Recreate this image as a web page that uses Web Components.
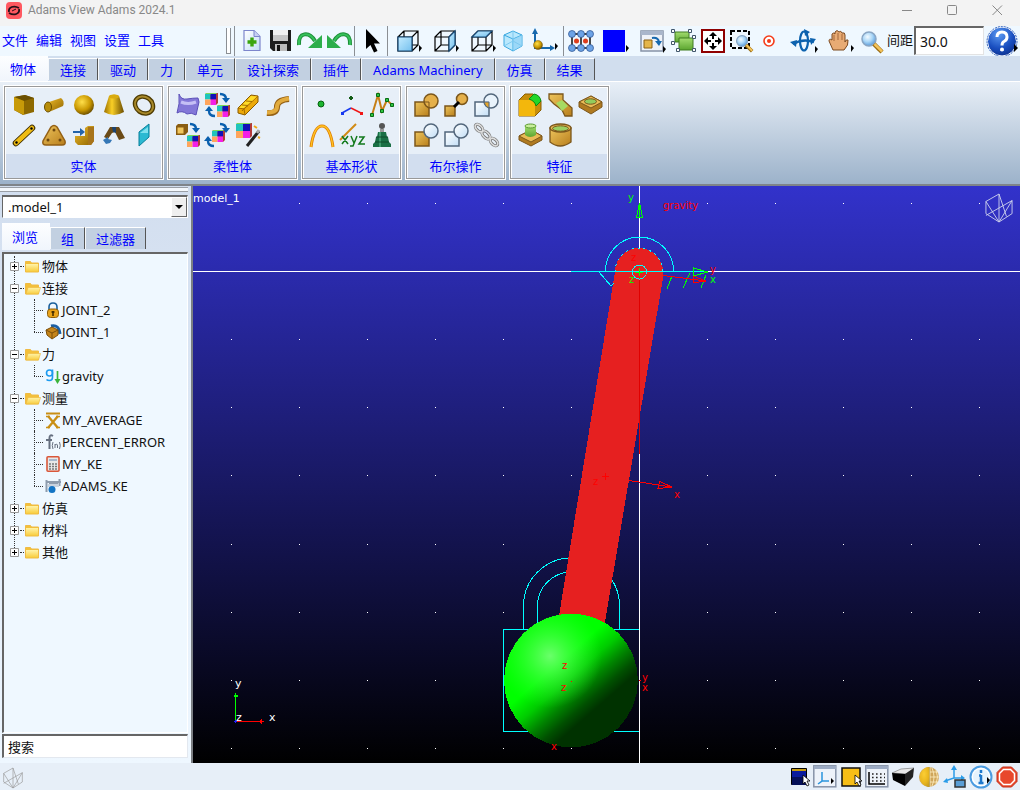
<!DOCTYPE html>
<html lang="zh-CN">
<head>
<meta charset="utf-8">
<title>Adams View Adams 2024.1</title>
<style>
html, body { margin: 0; height: 100%; }
body { font: 13px/20px "Noto Sans", "Noto Sans CJK SC", sans-serif; color: #111; background: #e7eff8; }
</style>
</head>
<body>
<adams-app></adams-app>
<script>
const DEFS = `<defs>
<linearGradient id="gold" x1="0" y1="0" x2="1" y2="1"><stop offset="0" stop-color="#f0bd2c"/><stop offset="1" stop-color="#8f6400"/></linearGradient>
<linearGradient id="tan" x1="0" y1="0" x2="1" y2="1"><stop offset="0" stop-color="#edc45c"/><stop offset="1" stop-color="#b87e1c"/></linearGradient>
<linearGradient id="cone" x1="0" x2="1"><stop offset="0" stop-color="#9a6f00"/><stop offset=".4" stop-color="#f9cf26"/><stop offset="1" stop-color="#6b4c00"/></linearGradient>
<radialGradient id="ball" cx=".4" cy=".35" r=".7"><stop offset="0" stop-color="#ffdf4a"/><stop offset=".6" stop-color="#c99700"/><stop offset="1" stop-color="#5e4400"/></radialGradient>
<linearGradient id="ice" x1="0" y1="0" x2="1" y2="1"><stop offset="0" stop-color="#fff"/><stop offset="1" stop-color="#c3def6"/></linearGradient>
<linearGradient id="sky" x1="0" y1="0" x2="1" y2="1"><stop offset="0" stop-color="#c5ecff"/><stop offset="1" stop-color="#74c0ee"/></linearGradient>
<linearGradient id="lime" x1="0" y1="0" x2="0" y2="1"><stop offset="0" stop-color="#a3dc70"/><stop offset="1" stop-color="#5ba52f"/></linearGradient>
<linearGradient id="fold" x1="0" y1="0" x2="0" y2="1"><stop offset="0" stop-color="#fff3a8"/><stop offset="1" stop-color="#f8cd3e"/></linearGradient>
<radialGradient id="lens" cx=".4" cy=".35" r=".7"><stop offset="0" stop-color="#f4fbff"/><stop offset=".5" stop-color="#a9d6f7"/><stop offset="1" stop-color="#4f93d6"/></radialGradient>
<radialGradient id="gem" cx=".4" cy=".25" r=".8"><stop offset="0" stop-color="#5c9bf2"/><stop offset=".6" stop-color="#1a4fc0"/><stop offset="1" stop-color="#0b2f8c"/></radialGradient>
</defs>`;
const MORE = '<path d="M23 16l3 3-3 4z" fill="#000"/>';
const quad = (x, y, s) => `<g transform="translate(${x} ${y})"><path d="M0 1l2-1h${s}v${s - 1}l-2 2z" fill="#b43a3a"/><path d="M1 0h${s}l-2 2H0z" fill="#7cd858"/><path d="M0 1h${s / 2}v${s / 2}H0z" fill="#1fc4bd"/><path d="M${s / 2} 1h${s / 2}v${s / 2}H${s / 2}z" fill="#1111b8"/><path d="M0 ${s / 2 + 1}h${s / 2}v${s / 2}H0z" fill="#ffa55c"/><path d="M${s / 2} ${s / 2 + 1}h${s / 2}v${s / 2}H${s / 2}z" fill="#f31fe6"/></g>`;
const arcDown = (x, y) => `<g transform="translate(${x} ${y})"><path d="M0 1q6 0 6 5" fill="none" stroke="#0a5fae" stroke-width="2.400"/><path d="M2 5h8l-4 5z" fill="#0a5fae"/></g>`;
const arcUp = (x, y) => `<g transform="translate(${x} ${y})"><path d="M9 10q-6 0-6-5" fill="none" stroke="#0a5fae" stroke-width="2.400"/><path d="M-1 5h8l-4-5z" fill="#0a5fae"/></g>`;
const lens = '<circle cx="9" cy="9" r="7" fill="url(#lens)" stroke="#8aa6c4" stroke-width="1.500"/><path d="M14 14l8 8" stroke="#9a6b10" stroke-width="4.500"/><path d="M14.500 14l7.500 7.500" stroke="#f4c45a" stroke-width="2.500"/>';
const wire = '<path d="M2 8h14v14H2zM8 2h14v14H8zM2 8l6-6M16 8l6-6M2 22l6-6M16 22l6-6" fill="none" stroke="#000" stroke-width="1.200"/>';
const pointer = (x, y) => `<path transform="translate(${x} ${y})" d="M0 0v9l2-2 2 4 2-1-2-4h3z" fill="#fff" stroke="#000" stroke-width=".8"/>`;
const mesh = '<path d="M1 9L15 1v30L1 22zM15 31L29 22V8zM1 24L29 8M15 1l8 24M1 9l14 22" fill="none" stroke="currentColor"/>';
const curl = '<path d="M2 16C1 3 12 2 18 12" fill="none" stroke="#1c8f38" stroke-width="4"/><path d="M2 16C1 3 12 2 18 12" fill="none" stroke="#35c05a" stroke-width="2"/><path d="M25 6v13H11z" fill="#2cae4b"/>';

/* name: [width, height, viewBox, markup] */
const ICONS = {
  app: [17, 17, '0 0 17 17', '<rect width="16" height="17" rx="4" fill="#ff5860"/><path d="M3 10C2 5 8 3 13 6M13 7c1 5-5 7-10 4" fill="none" stroke="#241018" stroke-width="1.800"/><path d="M6 9l4-2" stroke="#241018" stroke-width="1"/>'],
  min: [11, 11, '0 0 11 11', '<path d="M0 5.500h10" stroke="#888"/>'],
  max: [11, 11, '0 0 11 11', '<rect x=".5" y=".5" width="9" height="9" rx="1" fill="none" stroke="#888"/>'],
  close: [11, 11, '0 0 11 11', '<path d="M.5.5l9.500 9.500M10 .5L.5 10" stroke="#888"/>'],
  doc: [18, 24, '0 0 18 24', '<path d="M1 1.500h10l6 6v14H1z" fill="url(#ice)" stroke="#7d86cc" stroke-width="1.200"/><path d="M11 1.500v6h6" fill="#c7d0f2" stroke="#7d86cc"/><path d="M9 8.500v9M4.500 13h9" stroke="#3aa50e" stroke-width="3.400"/>'],
  save: [24, 24, '0 0 24 24', '<path d="M1 1h21v21H4l-3-3z" fill="#1d1d1d"/><path d="M4 1h15v11H4z" fill="#f3f3f3"/><path d="M4 6h15v6H4z" fill="#c8c8c8"/><path d="M6 15h12v7H6z" fill="#bdbdbd"/><path d="M8 16h3v6H8z" fill="#111"/>'],
  undo: [26, 24, '0 0 26 24', curl],
  redo: [26, 24, '0 0 26 24', `<g transform="translate(26 0) scale(-1 1)">${curl}</g>`],
  cursor: [16, 24, '0 0 16 24', '<path d="M2 0v20l4.500-4 3.500 7.500 3.500-1.500-3.500-7.500h6z" fill="#000"/>'],
  front: [26, 24, '0 0 26 24', `${wire}<path d="M2 8h14v14H2z" fill="url(#sky)" stroke="#174a78" stroke-width="1.200"/>${MORE}`],
  side: [26, 24, '0 0 26 24', `${wire}<path d="M16 8l6-6v14l-6 6z" fill="url(#sky)" stroke="#174a78" stroke-width="1.200"/>${MORE}`],
  topview: [26, 24, '0 0 26 24', `${wire}<path d="M2 8l6-6h14l-6 6z" fill="url(#sky)" stroke="#174a78" stroke-width="1.200"/>${MORE}`],
  iso: [20, 24, '0 0 20 24', '<path d="M10 2l9 4v11l-9 5-9-5V6z" fill="#b9e8fd" stroke="#3aa8e0"/><path d="M1 6l9 4 9-4M10 10v12" fill="none" stroke="#3aa8e0"/><path d="M10 10l9-4v11l-9 5z" fill="#8fd2f5" opacity=".7"/><path d="M1 17l9-5 9 5M10 2v10" fill="none" stroke="#7cc9f0"/>'],
  tripod: [28, 26, '0 0 28 26', '<path d="M5 4v16h17" fill="none" stroke="#1668ae" stroke-width="2"/><path d="M2 6l3-6 3 6zM20 17l5 3-5 3z" fill="#1668ae"/><circle cx="8" cy="17" r="4.500" fill="url(#ball)" stroke="#7c5a10" stroke-width=".5"/><path d="M25 15l3 3-3 4z" fill="#000"/>'],
  nodes: [26, 22, '0 0 26 22', `<path d="M4 4h18M4 18h18" stroke="#111" stroke-width="1.500"/><path d="M4 4v14M22 4v14M13 4v14" stroke="#111" stroke-width="1.500"/><g fill="#6ca3e6" stroke="#2a4f8c" stroke-width=".7">${[4, 13, 22].map(x => [4, 18].map(y => `<circle cx="${x}" cy="${y}" r="3.500"/>`).join('')).join('')}</g><circle cx="8.500" cy="11" r="2.500" fill="#dd3d1c"/><circle cx="17.500" cy="11" r="2.500" fill="#dd3d1c"/>`],
  swatch: [26, 24, '0 0 26 24', '<path d="M2 1h22v22H2z" fill="#00f"/><path d="M25 16l3 3-3 4z" fill="#000"/>'],
  winrot: [26, 24, '0 0 26 24', '<rect x="3" y="2" width="22" height="20" fill="#eef2f8" stroke="#8793a8" stroke-width="1.500"/><path d="M3 2h22v4H3z" fill="#a9b6cb"/><path d="M6 11h8v8H6z" fill="#e5b54a" stroke="#8a6014"/><path d="M14 9q6-1 7 4" fill="none" stroke="#1668ae" stroke-width="2"/><path d="M17 12h7l-3 5z" fill="#1668ae"/><path d="M25 17l3 3-3 4z" fill="#000"/>'],
  parts: [25, 24, '0 0 25 24', '<path d="M4 3h14v10H4z" fill="url(#lime)" stroke="#3f7d1f"/><path d="M8 9h14v12H8z" fill="url(#lime)" stroke="#3f7d1f"/><g fill="#fff" stroke="#40566a"><path d="M.5.5h3v3h-3zM17.500.5h3v3h-3zM.5 12.500h3v3h-3zM21.500 6.500h3v3h-3zM5.500 19.500h3v3h-3zM21.500 19.500h3v3h-3z"/></g>'],
  fit: [25, 24, '0 0 25 24', '<rect x="2" y="1" width="22" height="22" fill="#fff" stroke="#900000" stroke-width="2"/><path d="M13 3l4 4h-8zM13 21l4-4h-8zM4 12l4-4v8zM22 12l-4-4v8z" fill="#000"/><path d="M13 6v4M13 14v4M7 12h4M15 12h4" stroke="#000" stroke-width="2"/>'],
  zoombox: [24, 24, '0 0 24 24', `<rect x="1" y="2" width="18" height="17" fill="none" stroke="#000" stroke-width="2" stroke-dasharray="4 2"/><g transform="translate(5 5) scale(.78)">${lens}</g>`],
  target: [18, 12, '0 0 18 12', '<circle cx="7" cy="6" r="5" fill="#fff" stroke="#f43c1a" stroke-width="1.600"/><circle cx="7" cy="6" r="2" fill="#f43c1a"/>'],
  orbit: [28, 24, '0 0 28 24', '<ellipse cx="14" cy="12" rx="4" ry="9.500" fill="none" stroke="#0d62ae" stroke-width="2.200"/><path d="M3 15q10-6 21-2" fill="none" stroke="#0d62ae" stroke-width="2.500"/><path d="M0 13l7-2-1 7zM26 10l-6-1 1 7zM14 0l6 3-5 4z" fill="#0d62ae"/><path d="M25 17l3 3-3 4z" fill="#000"/>'],
  hand: [26, 24, '0 0 26 24', '<path d="M5 21L1 12q0-3 3-1V5q2-2 3 0V3q2-3 4 0 2-2 3 1 3-1 3 2v7q1-3 3-2 1 5-4 10z" fill="#e8ab74" stroke="#7c4a21"/><path d="M6 6v6M10 4v7M14 5v6" stroke="#a5693a"/><path d="M23 16l3 3-3 4z" fill="#000"/>'],
  zoom: [23, 23, '0 0 23 23', lens],
  help: [33, 31, '0 0 33 31', '<circle cx="16" cy="15.500" r="14.500" fill="url(#gem)" stroke="#fff" stroke-width="1"/><circle cx="16" cy="15.500" r="15" fill="none" stroke="#2d5cb8" stroke-dasharray="2 1"/><path d="M11 11q0-5 5-5t5 5q0 3-3 4.500-2 1-2 4" fill="none" stroke="#fff" stroke-width="3"/><circle cx="16" cy="23.500" r="2" fill="#fff"/><path d="M28 18l4 4-4 4z" fill="#000"/>'],

  box: [24, 24, '0 0 24 24', '<path d="M2 4l11-2 9 3v14l-11 3-9-5z" fill="#8d6900"/><path d="M2 4l11-2 9 3-10 3z" fill="#6b5000"/><path d="M2 4l10 4v14L2 17z" fill="#c79a08"/>'],
  cyl: [24, 24, '0 0 24 24', '<path d="M4 10L19 5q4 3 2 8L7 19z" fill="url(#gold)"/><ellipse cx="6" cy="14" rx="3.500" ry="5" fill="#b88d0a" stroke="#6c4f00"/>'],
  sphere: [24, 24, '0 0 24 24', '<circle cx="12" cy="12" r="10" fill="url(#ball)"/>'],
  frustum: [24, 24, '0 0 24 24', '<path d="M7 3L2 19q10 6 20 0L17 3q-5-3-10 0z" fill="url(#cone)"/><ellipse cx="12" cy="3.500" rx="5" ry="2" fill="#d9ab10"/>'],
  torus: [24, 24, '0 0 24 24', '<g transform="rotate(35 12 12)"><ellipse cx="12" cy="12" rx="9.500" ry="8" fill="none" stroke="#4d3a00" stroke-width="4.500"/><ellipse cx="12" cy="12" rx="9.500" ry="8" fill="none" stroke="#a8892a" stroke-width="2"/></g>'],
  link: [24, 24, '0 0 24 24', '<path d="M4 20L20 5" stroke="#3d2c00" stroke-width="6.500" stroke-linecap="round"/><path d="M4 20L20 5" stroke="#efbc14" stroke-width="4.500" stroke-linecap="round"/><circle cx="4.500" cy="19.500" r="1.200"/><circle cx="19.500" cy="5.500" r="1.200"/>'],
  plate: [24, 24, '0 0 24 24', '<path d="M9 4q3-3 6 0l8 14q1 4-3 4H4q-4 0-3-4z" fill="url(#tan)" stroke="#946015" stroke-width="1.500"/><g fill="#6e4810"><circle cx="12" cy="7" r="1.500"/><circle cx="6" cy="17" r="1.500"/><circle cx="18" cy="17" r="1.500"/></g>'],
  extrude: [24, 24, '0 0 24 24', '<path d="M3 13h10V5l3-2h6v15l-3 4H6l-3-3z" fill="url(#gold)"/><path d="M16 4h6v14l-3 4h-3z" fill="#a8741a"/><path d="M1 9h9" stroke="#2464aa" stroke-width="2"/><path d="M8 5l5 4-5 4z" fill="#2464aa"/>'],
  revolve: [24, 24, '0 0 24 24', '<path d="M2 14L8 4h9l6 11-6 2-4-8-3 1-4 6z" fill="#6b4a16"/><path d="M10 4h4v6l-3-1z" fill="#1d4470"/><path d="M1 17l5-3v2l4 1-2 3-4 1z" fill="#3577b6"/>'],
  plane: [24, 24, '0 0 24 24', '<path d="M7 9L17 1v13L7 23z" fill="#2bb9d2" stroke="#077f9a"/><path d="M8 10l8-6v6z" fill="#7fe0ee"/>'],
  flex: [24, 24, '0 0 24 24', '<path d="M3 1q2 6 8 5t11-1l1 4-3 13q-5-3-9-1-5-4-10-1 3-9 2-19z" fill="#8377d8" stroke="#5a4fb8"/><path d="M5 9q7 3 15 0" stroke="#c5bff5" stroke-width="3" fill="none"/>'],
  swap: [26, 24, '0 0 26 24', quad(0, 0, 11) + quad(12, 12, 11) + arcDown(15, 0) + arcUp(1, 13)],
  brick: [24, 24, '0 0 24 24', '<path d="M2 15L15 2l7 1v6L9 22l-7-2z" fill="#eca90a" stroke="#8a5b00"/><path d="M2 15l6 1L22 3M8 16l1 6M6 12l6 1M11 7l5 1M6 18L17 5" stroke="#a56c00" fill="none"/><path d="M3 15L15 3l6 .5L8 15z" fill="#ffdc28"/><path d="M6 12l6 .5M10 8l6 .5" stroke="#a56c00"/>'],
  bend: [24, 24, '0 0 24 24', '<path d="M1 20q10 1 10-6t12-8" fill="none" stroke="#946015" stroke-width="6"/><path d="M1 19.500q10 0 10-6t12-8" fill="none" stroke="#e2ab3e" stroke-width="4"/>'],
  boxswap: [26, 24, '0 0 26 24', '<path d="M1 3l2-2h10v8l-3 3H1z" fill="#8a5d12"/><path d="M2 4h7v7H2z" fill="#f0c65e" stroke="#8a5d12"/>' + quad(12, 12, 11) + arcDown(15, 0)],
  cycle: [26, 24, '0 0 26 24', quad(7, 7, 11) + arcDown(15, 0) + arcUp(0, 13)],
  wand: [24, 24, '0 0 24 24', quad(0, 0, 14) + '<path d="M11 23L23 8" stroke="#222" stroke-width="3"/><path d="M21 10l2-3" stroke="#aaa" stroke-width="3"/><path d="M18 3l3 2M22 14l2 1" stroke="#f0a818" stroke-width="2"/>'],
  point: [24, 24, '0 0 24 24', '<circle cx="11" cy="11" r="3" fill="#1db530" stroke="#04610f"/>'],
  marker: [24, 24, '0 0 24 24', '<path d="M11 3v4M9 5h4" stroke="#145c16" stroke-width="2"/><path d="M11 15L2 20" stroke="#1638f0" stroke-width="1.500"/><path d="M11 15l10 5" stroke="#f01616" stroke-width="1.500"/><path d="M1 19h3v3H1z" fill="#1638f0"/><path d="M20 19h3v3h-3z" fill="#f01616"/>'],
  poly: [24, 24, '0 0 24 24', '<path d="M2 22L8 2l4 16 5-11 5 5" fill="none" stroke="#c67f16" stroke-width="2"/><g fill="#2fc441" stroke="#076b12"><path d="M.5 20.500h3v3h-3zM6.500.5h3v3h-3zM10.500 16.500h3v3h-3zM15.500 5.500h3v3h-3zM20.500 10.500h3v3h-3z"/></g>'],
  arc: [24, 24, '0 0 24 24', '<path d="M1 24Q4 3 12 3t11 21" fill="none" stroke="#e07d00" stroke-width="3"/><path d="M1 24Q4 3 12 3t11 21" fill="none" stroke="#ffc423" stroke-width="1.300"/>'],
  xyz: [26, 24, '0 0 26 24', '<path d="M1 17L17 1" stroke="#d18a15" stroke-width="2"/><path d="M3 13l6 8M9 13l-6 8M12 13l3 7M18 13l-4 10h-3M20 14h5l-5 7h6" stroke="#137a1c" stroke-width="1.500" fill="none"/>'],
  mass: [24, 24, '0 0 24 24', '<circle cx="12" cy="3" r="3" fill="#555"/><path d="M10 6h4v4h-4z" fill="#999"/><path d="M8 9h8l1 5h1l1 5 2 2v3H3v-3l2-2 1-5h1z" fill="#1a6f45"/><path d="M10 9v15" stroke="#3f9a6c" stroke-width="2"/><path d="M5 19h14M6 14h12" stroke="#0c4a2b"/>'],
  unite: [25, 24, '0 0 25 24', '<path d="M1 9h14v14H1z" fill="url(#tan)" stroke="#7c571b" stroke-width="1.500"/><circle cx="17" cy="8" r="7" fill="#e5b04a" stroke="#7c571b" stroke-width="1.500"/><path d="M10 9h5v6" fill="none" stroke="#7c571b"/>'],
  merge: [25, 24, '0 0 25 24', '<path d="M1 13h10v10H1z" fill="url(#tan)" stroke="#7c571b" stroke-width="1.500"/><circle cx="18" cy="6" r="5.500" fill="#e5b04a" stroke="#7c571b" stroke-width="1.500"/><path d="M10 14l5-5" stroke="#000" stroke-width="3"/>'],
  intersect: [25, 24, '0 0 25 24', '<path d="M1 9h14v14H1z" fill="url(#ice)" stroke="#53677c" stroke-width="1.500"/><circle cx="17" cy="8" r="7" fill="#eaf4fd" fill-opacity=".8" stroke="#53677c" stroke-width="1.500"/><path d="M10 9h5v6q-4-1-5-6z" fill="#e5a52a" stroke="#53677c"/>'],
  cut: [25, 24, '0 0 25 24', '<path d="M1 9h14v14H1z" fill="url(#tan)" stroke="#7c571b" stroke-width="1.500"/><circle cx="17" cy="8" r="7" fill="url(#ice)" stroke="#53677c" stroke-width="1.500"/>'],
  split: [25, 24, '0 0 25 24', '<path d="M1 9h14v14H1z" fill="url(#ice)" stroke="#53677c" stroke-width="1.500"/><circle cx="17" cy="8" r="7" fill="url(#ice)" stroke="#53677c" stroke-width="1.500"/>'],
  chain: [25, 24, '0 0 25 24', '<g fill="none" stroke="#777" stroke-width="3"><ellipse cx="5" cy="5" rx="4.500" ry="2.700" transform="rotate(45 5 5)"/><ellipse cx="12" cy="12" rx="5" ry="2.700" transform="rotate(45 12 12)"/><ellipse cx="20" cy="19" rx="4.500" ry="2.700" transform="rotate(45 20 19)"/></g><g fill="none" stroke="#ddd" stroke-width="1.500"><ellipse cx="5" cy="5" rx="4.500" ry="2.700" transform="rotate(45 5 5)"/><ellipse cx="12" cy="12" rx="5" ry="2.700" transform="rotate(45 12 12)"/><ellipse cx="20" cy="19" rx="4.500" ry="2.700" transform="rotate(45 20 19)"/></g>'],
  fillet: [24, 24, '0 0 24 24', '<path d="M1 7l6-6h8l8 7v9l-6 6H1z" fill="#c68e0a" stroke="#8a5d00"/><path d="M1 7h11q5 1 5 6v10H1z" fill="#f3b70c"/><path d="M11 6l5-5q6 1 7 7l-5 5q-1-5-7-7z" fill="#23d628" stroke="#0d8a12"/>'],
  chamfer: [25, 24, '0 0 25 24', '<path d="M1 1h14v6l9 8v8h-7l-3-6-8-6-5-5z" fill="url(#tan)" stroke="#7c571b" stroke-width="1.300"/><path d="M8 10l6-3 6 6-6 5z" fill="#a6da62"/>'],
  hole: [25, 24, '0 0 25 24', '<path d="M1 9l12-6 11 6v5l-11 7L1 14z" fill="#b07a20" stroke="#7c571b"/><path d="M1 9l12-6 11 6-11 6z" fill="#e9bb56" stroke="#7c571b"/><ellipse cx="12.500" cy="8.500" rx="6" ry="2.700" fill="#92cc5c" stroke="#7c571b"/>'],
  boss: [25, 24, '0 0 25 24', '<path d="M1 13l12-6 11 6v4l-11 6L1 17z" fill="#b07a20" stroke="#7c571b"/><path d="M1 13l12-6 11 6-11 6z" fill="#e9bb56" stroke="#7c571b"/><path d="M7 3v9q5 4 11 0V3z" fill="url(#lime)"/><ellipse cx="12.500" cy="3" rx="5.500" ry="2" fill="#c8ee9c" stroke="#5a9a30"/>'],
  shell: [25, 24, '0 0 25 24', '<path d="M2 5v14q10 8 21 0V5z" fill="url(#tan)" stroke="#7c571b" stroke-width="1.300"/><ellipse cx="12.500" cy="5" rx="10.500" ry="4" fill="#e9bb56" stroke="#7c571b" stroke-width="1.300"/><ellipse cx="12.500" cy="5.500" rx="8" ry="2.700" fill="#9bcf62" stroke="#7c571b"/>'],

  folder: [16, 14, '0 0 16 14', '<path d="M.5 2.500h5l1 1.500h7v9H.5z" fill="#f3c03a" stroke="#efbb45"/><path d="M1 5h12v7.500H1z" fill="url(#fold)"/>'],
  folderopen: [16, 14, '0 0 16 14', '<path d="M.5 2.500h5l1 1.500h7v9H.5z" fill="#f3c03a" stroke="#efbb45"/><path d="M3 6.500h12.500l-2 6.500H1z" fill="url(#fold)" stroke="#eebb45" stroke-width=".7"/>'],
  lock: [16, 16, '0 0 16 16', '<path d="M4 8V5q0-4 4-4t4 4v3" fill="none" stroke="#1a5f9c" stroke-width="1.600"/><rect x="2.500" y="7" width="11" height="8.500" rx="3" fill="#eaa41a" stroke="#8e5f0a"/><path d="M8 9v5M6.500 10h3" stroke="#3d2800" stroke-width="1.500"/>'],
  joint: [17, 16, '0 0 17 16', '<path d="M6 2q8-2 9 8" fill="none" stroke="#1a5fa5" stroke-width="3"/><path d="M1 6l6-3 6 3v5l-6 4-5-4z" fill="#c5851a" stroke="#7c4e08"/><path d="M1 6l6 3 6-3M7 9v5" fill="none" stroke="#7c4e08"/>'],
  grav: [17, 16, '0 0 17 16', '<circle cx="4.500" cy="5" r="3" fill="none" stroke="#1d9bf0" stroke-width="1.600"/><path d="M7.500 1.500v8q0 3-3 3-2 0-3-1" fill="none" stroke="#1d9bf0" stroke-width="1.600"/><path d="M12.500 3v9" stroke="#3ab43a" stroke-width="1.700"/><path d="M9.500 11h6l-3 5z" fill="#3ab43a"/>'],
  avg: [16, 16, '0 0 16 16', '<path d="M1 1.500h14" stroke="#c98f14" stroke-width="2"/><path d="M3 4l10 12M13 4L3 16" stroke="#c98f14" stroke-width="2.300"/><path d="M1 4.500h4M11 4.500h4M1 15.500h4M11 15.500h4" stroke="#c98f14" stroke-width="1.400"/>'],
  func: [17, 16, '0 0 17 16', '<path d="M8 2Q4.500 0 4.500 4v11M1 6h6" fill="none" stroke="#667080" stroke-width="2"/><path d="M8 8q-1.500 3.500 0 7M14.500 8q1.500 3.500 0 7M10 14v-4M10 11q2.500-2 2.500 1v2" fill="none" stroke="#667080"/>'],
  calc: [16, 16, '0 0 16 16', '<rect x="2" y=".8" width="12" height="14.500" rx="1" fill="#e8e8e8" stroke="#d9573a" stroke-width="1.600"/><path d="M4 3h8v2H4z" fill="#a7b8cc"/><path d="M4 8h8M4 10.500h8M4 13h8" stroke="#777" stroke-width="1.500" stroke-dasharray="2 1"/>'],
  ke: [17, 16, '0 0 17 16', '<path d="M1.500 2v12M4 6h9M1 4h15M14.500 1v7" stroke="#8e9cad" stroke-width="2"/><path d="M3 6h11v3H3z" fill="#c8d2de"/><circle cx="7" cy="11.500" r="3.500" fill="#1374c4"/>'],
  plus: [9, 9, '0 0 9 9', '<path d="M.5.5h8v8h-8z" fill="#fff" stroke="#999"/><path d="M2 4.500h5M4.500 2v5" stroke="#000"/>'],
  minus: [9, 9, '0 0 9 9', '<path d="M.5.5h8v8h-8z" fill="#fff" stroke="#999"/><path d="M2 4.500h5" stroke="#000"/>'],
  meshS: [20, 22, '0 0 30 32', mesh],
  meshL: [28, 32, '0 0 30 32', mesh],

  sbg: [22, 20, '0 0 22 20', '<path d="M3.500 1.500h15v16h-15z" fill="#0a1b9c" stroke="#000"/><path d="M4 2h14v2H4z" fill="#c49a10"/><path d="M4 10h14v8H4z" fill="#050f58"/>' + pointer(15, 8)],
  saxis: [24, 23, '0 0 24 23', '<rect x=".8" y=".8" width="22" height="21" fill="#eef3fa" stroke="#8793a8" stroke-width="1.500"/><path d="M1 1h22v3H1z" fill="#9dacc4"/><path d="M9 7v9l-4 3M9 16h7" fill="none" stroke="#2a95dd" stroke-width="1.500"/><path d="M18 13l3 3-3 3z" fill="#000"/>'],
  sgold: [20, 20, '0 0 20 20', '<path d="M1 1h18v18H1z" fill="#f7be17" stroke="#111" stroke-width="1.500"/>' + pointer(14, 8)],
  sgrid: [24, 23, '0 0 24 23', '<rect x=".8" y=".8" width="22" height="21" fill="#eef3fa" stroke="#8793a8" stroke-width="1.500"/><path d="M1 1h22v3H1z" fill="#9dacc4"/><path d="M4 7v12h16" fill="none" stroke="#000" stroke-width="1.500"/><path d="M7 9h13M7 12.500h13M7 16h13" stroke="#222" stroke-width="1.600" stroke-dasharray="1.600 2.400"/>'],
  sblock: [22, 20, '0 0 22 20', '<path d="M0 6l9-4 13-1-8 6z" fill="#e8e8e8" stroke="#555" stroke-width=".5"/><path d="M0 6l13 1v12L1 13z" fill="#000"/><path d="M13 7l9-6-1 9-8 9z" fill="#222"/>'],
  sball: [22, 22, '0 0 22 22', '<circle cx="11" cy="11" r="10" fill="#cfa65a"/><path d="M12 1a10 10 0 1 0 0 20z" fill="url(#ball)"/><path d="M11.500 1a10 10 0 0 0 0 20z" fill="#f9c62c" opacity=".7"/><path d="M12 1v20M14 2q4 9 0 18M18 4q3 7 0 14M12 6h8M12 11h9M12 16h8" stroke="#fff0c4" fill="none" stroke-width=".8"/>'],
  strip: [24, 24, '0 0 24 24', '<path d="M11 3v10l-9 3M11 13h9" fill="none" stroke="#2b9ce8" stroke-width="1.500"/><path d="M8 5l3-5 3 5zM4 13l-4 4 5 1zM18 10l4 3-4 3z" fill="#2b9ce8"/><rect x="12" y="15" width="10" height="7" fill="#5b9ed6" stroke="#333" stroke-width="1.500"/>'],
  sinfo: [24, 24, '0 0 24 24', '<circle cx="12" cy="12" r="10.500" fill="#fff" stroke="#4a9be0" stroke-width="2"/><circle cx="12" cy="12" r="8" fill="#e6f3fd"/><path d="M12 5v3M12 10v8M9.500 18h5M10 10.500h2" stroke="#1e78cc" stroke-width="2.500"/><path d="M18 12l3 3-3 4z" fill="#000"/>'],
  sstop: [22, 22, '0 0 22 22', '<path d="M6.500 1h9L21 6.500v9L15.500 21h-9L1 15.500v-9z" fill="#e8482c" stroke="#c42f18"/><path d="M7.500 3.500h7l4 4v7l-4 4h-7l-4-4v-7z" fill="none" stroke="#fff" stroke-width="1.500"/>']
};

class UiIcon extends HTMLElement {
  connectedCallback() {
    const [w, h, box, art] = ICONS[this.getAttribute('name')];
    this.attachShadow({ mode: 'open' }).innerHTML =
      `<style>:host{display:inline-flex;flex:none}svg{display:block;overflow:visible}</style>
       <svg width="${w}" height="${h}" viewBox="${box}" aria-hidden="true">${DEFS}${art}</svg>`;
  }
}
customElements.define('ui-icon', UiIcon);

class ToolButton extends HTMLElement {
  connectedCallback() {
    this.attachShadow({ mode: 'open' }).innerHTML = `<style>
      :host { display: flex; flex: none; width: 29px; height: 30px; }
      :host([size="s"]) { width: 24px; }
      :host([size="l"]) { width: 37px; }
      :host([size="cell"]) { width: 30px; }
      :host([size="status"]) { width: 26px; height: 26px; }
      :host([size="window"]) { width: 45px; height: 20px; }
      button { flex: 1; display: flex; align-items: center; justify-content: center; margin: 0; padding: 0; border: 0; background: none; }
      button:hover { background: #ffffff80; }
    </style>
    <button type="button" aria-label="${this.getAttribute('label') || this.getAttribute('icon')}"><ui-icon name="${this.getAttribute('icon')}"></ui-icon></button>`;
  }
}
customElements.define('tool-button', ToolButton);

class TitleBar extends HTMLElement {
  connectedCallback() {
    this.attachShadow({ mode: 'open' }).innerHTML = `<style>
      :host { display: flex; align-items: flex-start; height: 26px; background: #f3f3f3; color: #888; font-family: Roboto, sans-serif; font-size: 12px; }
      ui-icon { margin: 2px 5px 0 6px; }
      h1 { flex: 1; margin: 0; font: inherit; line-height: 21px; }
    </style>
    <ui-icon name="app"></ui-icon><h1><slot></slot></h1>
    <tool-button size="window" icon="min" label="最小化"></tool-button>
    <tool-button size="window" icon="max" label="最大化"></tool-button>
    <tool-button size="window" icon="close" label="关闭"></tool-button>`;
  }
}
customElements.define('title-bar', TitleBar);

class ToolGroup extends HTMLElement {
  connectedCallback() {
    this.attachShadow({ mode: 'open' }).innerHTML = `<style>
      :host { display: flex; flex: none; height: 30px; padding: 0 1px 0 2px; border-left: 1px solid #8b8f94; }
    </style><slot></slot>`;
  }
}
customElements.define('tool-group', ToolGroup);

class MainToolbar extends HTMLElement {
  connectedCallback() {
    const group = list => '<tool-group>' + list.split(' ').map(n => {
      const [icon, size] = n.split(':');
      return `<tool-button icon="${icon}" size="${size || 'm'}"></tool-button>`;
    }).join('') + '</tool-group>';
    this.attachShadow({ mode: 'open' }).innerHTML = `<style>
      :host { display: flex; height: 30px; background: #eff8ff; overflow: hidden; }
      nav { width: 226px; flex: none; display: flex; gap: 8px; padding-left: 2px; box-sizing: border-box; }
      a { color: #00f; text-decoration: none; line-height: 28px; }
      .grip { flex: none; width: 3px; margin: 2px 3px 2px 0; border: 1px solid #8b8f94; border-top: 0; background: #fff; }
      label { display: flex; flex: 1; justify-content: flex-end; line-height: 28px; gap: 1px; white-space: nowrap; }
      input { flex: none; box-sizing: border-box; width: 70px; height: 29px; padding: 0 4px; border: 1px solid #e3e3e3; border-top: 2px solid #666; border-left: 2px solid #666; font: inherit; font-size: 14px; background: #fff; color: #111; }
      .help { width: 36px; }
    </style>
    <nav>${['文件', '编辑', '视图', '设置', '工具'].map(t => `<a href="#">${t}</a>`).join('')}</nav>
    <span class="grip"></span>
    ${group('doc save undo redo')}${group('cursor')}${group('front:l side:l topview:l iso:s tripod:l')}
    ${group('nodes swatch:l winrot:l parts fit zoombox target orbit:l hand:l zoom:s')}
    <label>间距<input type="text" value="30.0"></label>
    <tool-button class="help" icon="help" label="帮助"></tool-button>`;
  }
}
customElements.define('main-toolbar', MainToolbar);

class TabStrip extends HTMLElement {
  connectedCallback() {
    this.attachShadow({ mode: 'open' }).innerHTML = `<style>
      :host { display: flex; flex: none; align-items: flex-end; height: var(--strip, 25px); }
      button { flex: none; height: 22px; margin: 0 0 1px; padding: 0 var(--pad, 11px); border: 0; border-top: 1px solid #fff; border-left: 1px solid #f5f8fb; border-right: 1px solid #555; background: #c2d0e1; color: #00f; font: inherit; line-height: 20px; white-space: nowrap; }
      button[aria-selected="true"] { height: 100%; margin: 0; padding: 0 12px 0 10px; border: 0; background: linear-gradient(#fdfeff, #f0f5fc); }
    </style>
    <div role="tablist" style="display:contents">${this.getAttribute('tabs').split('|').map((t, i) => `<button type="button" role="tab" aria-selected="${i === 0}">${t}</button>`).join('')}</div>`;
  }
}
customElements.define('tab-strip', TabStrip);

class RibbonGroup extends HTMLElement {
  connectedCallback() {
    const icons = this.getAttribute('icons').split(' ');
    this.attachShadow({ mode: 'open' }).innerHTML = `<style>
      :host { display: flex; flex: none; flex-direction: column; box-sizing: border-box; height: 93px; border: 1px solid #999; outline: 1px solid #fff; padding: 1px; background: #fff; }
      .cells { display: grid; grid-template-columns: repeat(${this.getAttribute('cols')}, 30px); grid-auto-rows: 30px; padding: 2px 2px 4px 3px; background: #e7eff8; }
      h2 { flex: 1; margin: 0; background: #d2deef; color: #00f; font: inherit; line-height: 24px; text-align: center; }
    </style>
    <div class="cells">${icons.map(n => `<tool-button size="cell" icon="${n}"></tool-button>`).join('')}</div>
    <h2><slot></slot></h2>`;
  }
}
customElements.define('ribbon-group', RibbonGroup);

class TreeNode extends HTMLElement {
  connectedCallback() {
    const leaf = this.hasAttribute('leaf');
    const open = this.hasAttribute('open');
    const mark = leaf ? '' : `<ui-icon class="mark" name="${open ? 'minus' : 'plus'}"></ui-icon>`;
    const icon = leaf ? this.getAttribute('icon') : open ? 'folderopen' : 'folder';
    this.attachShadow({ mode: 'open' }).innerHTML = `<style>
      :host { display: block; position: relative; }
      .row { display: flex; align-items: center; height: 22px; padding-left: 5px; white-space: nowrap; }
      .dots { width: 4px; margin: 0 1px 0 1px; border-top: 1px dotted #333; }
      .text { padding-left: 1px; }
      :host([leaf]) .row { padding-left: 29px; }
      :host([leaf]) .dots { width: 9px; margin: 0 2px 0 0; }
      :host([leaf]) .text { padding-left: 0; }
      :host([leaf]) ui-icon { width: 17px; }
      :host([leaf])::before { content: ""; position: absolute; left: 29px; top: 0; height: 22px; border-left: 1px dotted #333; }
      :host([leaf][last])::before { height: 11px; }
    </style>
    <div class="row" role="treeitem">${mark}<span class="dots"></span><ui-icon name="${icon}"></ui-icon><span class="text">${this.getAttribute('label')}</span></div>
    <slot></slot>`;
  }
}
customElements.define('tree-node', TreeNode);

class ModelBrowser extends HTMLElement {
  connectedCallback() {
    this.attachShadow({ mode: 'open' }).innerHTML = `<style>
      :host { display: flex; flex-direction: column; flex: none; box-sizing: border-box; width: 193px; padding: 1px 3px 5px 2px; border-right: 2px solid #7b7f84; background: linear-gradient(#d2deef, #eef7ff); }
      .grip { flex: none; height: 3px; margin: 0 0 3px -2px; border: solid #9a9fa6; border-width: 1px 0; background: #f4f8fc; }
      .pick { position: relative; display: flex; flex: none; height: 23px; }
      select { flex: 1; min-width: 0; appearance: none; margin: 0; padding: 0 5px; border: 1px solid #fff; border-top: 2px solid #666; border-left: 1px solid #666; border-radius: 0; background: #fff; color: #111; font: inherit; }
      .drop { position: absolute; right: 1px; top: 2px; display: flex; align-items: center; justify-content: center; width: 14px; height: 18px; border: 1px solid #fff; border-right-color: #666; border-bottom-color: #666; background: #efefef; pointer-events: none; }
      tab-strip { --strip: 27px; --pad: 10px; margin-top: 5px; }
      .tree { position: relative; flex: 1; margin-top: 2px; padding: 1px 0; border: 1px solid #fff; border-top: 2px solid #666; border-left: 2px solid #666; background: #eff8ff; }
      .trunk { position: absolute; left: 10px; top: 2px; height: 296px; border-left: 1px dotted #333; }
      tree-node { margin-left: 1px; }
      tree-node tree-node { margin-left: 0; }
      input { flex: none; box-sizing: border-box; width: 100%; height: 24px; margin: 1px 0 0; padding: 0 4px; border: 1px solid #e3e8ef; border-top: 2px solid #666; border-left: 2px solid #666; background: #fff; color: #111; font: inherit; }
      input::placeholder { color: #111; opacity: 1; }
    </style>
    <div class="grip"></div>
    <div class="pick"><select aria-label="模型"><option>.model_1</option></select>
      <span class="drop"><svg width="8" height="4" viewBox="0 0 8 4" aria-hidden="true"><path d="M0 0h8L4 4z"/></svg></span></div>
    <tab-strip tabs="浏览|组|过滤器"></tab-strip>
    <div class="tree" role="tree"><span class="trunk"></span>
      <tree-node label="物体"></tree-node>
      <tree-node label="连接" open>
        <tree-node leaf icon="lock" label="JOINT_2"></tree-node>
        <tree-node leaf last icon="joint" label="JOINT_1"></tree-node>
      </tree-node>
      <tree-node label="力" open><tree-node leaf last icon="grav" label="gravity"></tree-node></tree-node>
      <tree-node label="测量" open>
        <tree-node leaf icon="avg" label="MY_AVERAGE"></tree-node>
        <tree-node leaf icon="func" label="PERCENT_ERROR"></tree-node>
        <tree-node leaf icon="calc" label="MY_KE"></tree-node>
        <tree-node leaf last icon="ke" label="ADAMS_KE"></tree-node>
      </tree-node>
      <tree-node label="仿真"></tree-node>
      <tree-node label="材料"></tree-node>
      <tree-node label="其他"></tree-node>
    </div>
    <input type="text" placeholder="搜索" aria-label="搜索">`;
  }
}
customElements.define('model-browser', ModelBrowser);

class ModelView extends HTMLElement {
  connectedCallback() {
    let dots = '';
    for (let r = 0; r < 9; r++) for (let c = 0; c < 12; c++)
      if (r || c) dots += `M${231 + c * 68} ${Math.round(203 + r * 68.1)}h1v1h-1z`;
    const rim = Array.from({ length: 32 }, (_, i) => {
      const a = i * Math.PI / 16;
      return `${(571 + 67 * Math.cos(a)).toFixed(1)},${(680.5 + 67 * Math.sin(a)).toFixed(1)}`;
    }).join(' ');
    this.attachShadow({ mode: 'open' }).innerHTML = `<style>
      :host { display: block; position: relative; flex: 1; min-width: 0; overflow: hidden; background: linear-gradient(#3232cb, #000); }
      svg.scene { position: absolute; inset: 0; width: 100%; height: 100%; font: 11px "DejaVu Sans", sans-serif; }
      .crisp { shape-rendering: crispEdges; }
      ui-icon { position: absolute; right: 7px; top: 6px; color: #c9cdec; }
    </style>
    <svg class="scene" viewBox="193 186 827 577" preserveAspectRatio="xMidYMid slice" role="img" aria-label="model_1">
      <defs>
        <linearGradient id="shade" gradientUnits="userSpaceOnUse" x1="527" y1="630" x2="615" y2="731">
          <stop offset=".34" stop-color="#0f0"/><stop offset=".48" stop-color="#00cc00"/><stop offset=".6" stop-color="#008400"/><stop offset=".7" stop-color="#005000"/><stop offset=".78" stop-color="#003200"/>
        </linearGradient>
        <radialGradient id="shine" gradientUnits="userSpaceOnUse" cx="550" cy="656" r="52">
          <stop offset="0" stop-color="#7dff7d" stop-opacity=".85"/><stop offset="1" stop-color="#3f3" stop-opacity="0"/>
        </radialGradient>
      </defs>
      <path class="crisp" d="${dots}" fill="#fff"/>
      <g class="crisp" fill="none" stroke="#0ff">
        <path d="M523.500 629V606A48 48 0 0 1 619.500 606V629M537.500 625V606A34 34 0 0 1 571.500 572"/>
        <path d="M639 629.500H503.500V731.500H639"/>
      </g>
      <path class="crisp" d="M193 271.500H1020M639.500 186V763" stroke="#fff"/>
      <path class="crisp" d="M615 272A24 24 0 0 1 663 272V278L604.500 625H557.500L615 272z" fill="#e62020"/>
      <path class="crisp" d="M615 272A24 24 0 0 1 663 272" fill="none" stroke="#0ff" stroke-dasharray="2 4"/>
      <path class="crisp" d="M639.500 280V454" stroke="#e00000"/>
      <g class="crisp" fill="none" stroke="#0ff">
        <path d="M571 271.500H707M605.500 271A34 34 0 0 1 673.500 271M599 272l12 14 3-3"/>
        <circle cx="639.500" cy="272" r="7"/>
      </g>
      <g class="crisp" fill="none" stroke="#0f0">
        <path d="M639.500 203l-3 14h6zM639.500 203v14M693.500 268v8l14-4zM672 276l-5 13M690 273l-7 15M706 275l-5 13M635 272h8M639.500 268v8"/>
      </g>
      <path class="crisp" d="M663 275.500l43 5.500M693 276l13 5-13 2zM602 476.500h7M605.500 473v7M629 480.500l43 6.500M659.500 481.500l12.500 5.500-14 1.500z" fill="none" stroke="#f00"/>
      <polygon class="crisp" points="${rim}" fill="url(#shade)"/>
      <polygon points="${rim}" fill="url(#shine)"/>
      <path class="crisp" d="M571 681h1v1h-1zM639 680h2v1h-2z" fill="#f00"/>
      <text x="193" y="202" fill="#fff">model_1</text>
      <text x="663" y="209" fill="#f00" font-size="10">gravity</text>
      <g fill="#0f0" font-size="10"><text x="628" y="201">y</text><text x="710" y="283">x</text><text x="629" y="283">z</text></g>
      <g fill="#f00" font-size="10">
        <text x="631" y="261">z</text><text x="710" y="273">y</text><text x="593" y="485">z</text><text x="674" y="498">x</text>
        <text x="562" y="669">z</text><text x="561" y="691">z</text><text x="642" y="681">y</text><text x="642" y="691">x</text><text x="551" y="750">x</text>
      </g>
      <path class="crisp" d="M235.500 693v28M234 695.500h4M234 696.500h4" stroke="#0f0" fill="none"/>
      <path class="crisp" d="M236 721.500h28M260.500 720v3M261.500 719v5" stroke="#f00" fill="none"/>
      <path class="crisp" d="M234 721h3v1h-3zM235 720h1v3h-1z" fill="#22f"/>
      <g fill="#fff"><text x="235" y="687">y</text><text x="236" y="721">z</text><text x="269" y="721">x</text></g>
    </svg>
    <ui-icon name="meshL"></ui-icon>`;
  }
}
customElements.define('model-view', ModelView);

class StatusBar extends HTMLElement {
  connectedCallback() {
    this.attachShadow({ mode: 'open' }).innerHTML = `<style>
      :host { display: flex; flex: none; align-items: center; height: 27px; background: #e7eff8; color: #999; }
      .logo { margin: 2px auto 0 3px; }
    </style>
    <ui-icon class="logo" name="meshS"></ui-icon>
    ${['sbg', 'saxis', 'sgold', 'sgrid', 'sblock', 'sball', 'strip', 'sinfo', 'sstop'].map(n => `<tool-button size="status" icon="${n}"></tool-button>`).join('')}`;
  }
}
customElements.define('status-bar', StatusBar);

class AdamsApp extends HTMLElement {
  connectedCallback() {
    this.attachShadow({ mode: 'open' }).innerHTML = `<style>
      :host { display: flex; flex-direction: column; min-height: 100vh; }
      .tabs { background: #d1deee; }
      .ribbon { display: flex; flex: none; gap: 5px; box-sizing: border-box; height: 105px; padding: 4px; border-top: 1px solid #fff; border-bottom: 2px solid #7f8489; background: linear-gradient(#e8eff7, #9cb2ca); }
      main { display: flex; flex: 1; }
    </style>
    <title-bar>Adams View Adams 2024.1</title-bar>
    <main-toolbar></main-toolbar>
    <tab-strip class="tabs" tabs="物体|连接|驱动|力|单元|设计探索|插件|Adams Machinery|仿真|结果"></tab-strip>
    <section class="ribbon">
      <ribbon-group cols="5" icons="box cyl sphere frustum torus link plate extrude revolve plane">实体</ribbon-group>
      <ribbon-group cols="4" icons="flex swap brick bend boxswap cycle wand">柔性体</ribbon-group>
      <ribbon-group cols="3" icons="point marker poly arc xyz mass">基本形状</ribbon-group>
      <ribbon-group cols="3" icons="unite merge intersect cut split chain">布尔操作</ribbon-group>
      <ribbon-group cols="3" icons="fillet chamfer hole boss shell">特征</ribbon-group>
    </section>
    <main><model-browser></model-browser><model-view></model-view></main>
    <status-bar></status-bar>`;
  }
}
customElements.define('adams-app', AdamsApp);
</script>
</body>
</html>
